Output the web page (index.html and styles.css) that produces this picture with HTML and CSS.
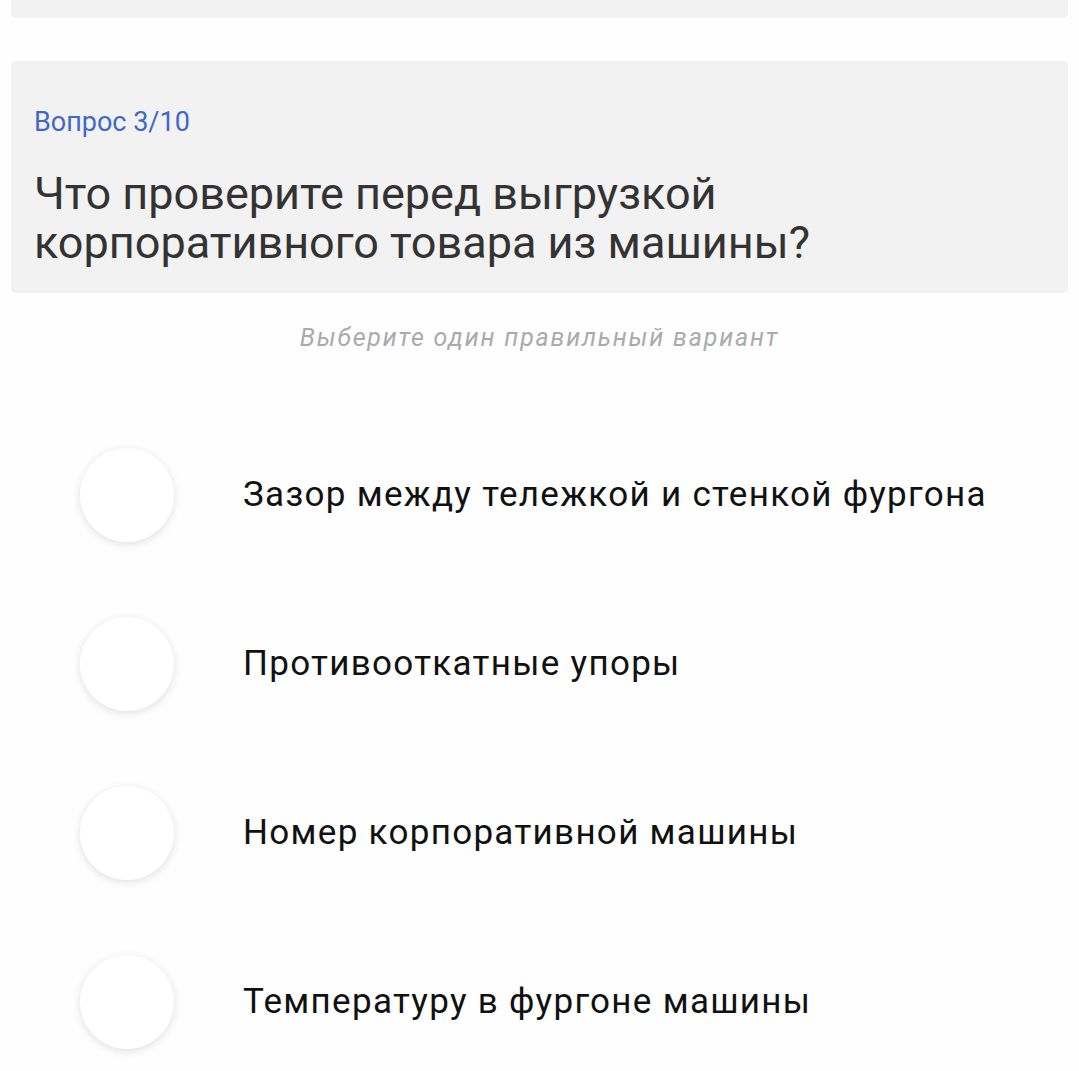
FILE: index.html
```html
<!DOCTYPE html>
<html lang="ru">
<head>
  <meta charset="UTF-8" />
  <title>Тест</title>
  <link rel="stylesheet" href="styles.css">
</head>
<body>

  <div class="card card-prev"></div>

  <div class="card question">
    <div class="counter">Вопрос 3/10</div>
    <h1 class="title">Что проверите перед выгрузкой корпоративного товара из машины?</h1>
  </div>

  <p class="hint">Выберите один правильный вариант</p>

  <ul class="answers">
    <li class="answer"><span class="radio"></span><span class="label">Зазор между тележкой и стенкой фургона</span></li>
    <li class="answer"><span class="radio"></span><span class="label">Противооткатные упоры</span></li>
    <li class="answer"><span class="radio"></span><span class="label">Номер корпоративной машины</span></li>
    <li class="answer"><span class="radio"></span><span class="label">Температуру в фургоне машины</span></li>
  </ul>

</body>
</html>
```

FILE: styles.css
```css
body {
  margin: 0;
  padding: 0 11px;
  background-color: #fefefe;
  font-family: Roboto, "Noto Sans", sans-serif;
  overflow: hidden;
}

.card {
  background-color: #f2f2f2;
  border-radius: 5px;
}

.card-prev {
  height: 60px;
  margin-top: -42px;
}

.question {
  box-sizing: border-box;
  margin-top: 43px;
  padding: 45px 23px 0;
  height: 232px;
}

.counter {
  color: #3f68c9;
  font-size: 27px;
  line-height: 32px;
}

.title {
  margin: 31px 0 0;
  color: #333333;
  font-size: 45px;
  font-weight: 400;
  line-height: 49px;
}

.hint {
  margin: 30px 0 0;
  text-align: center;
  color: #a9abaf;
  font-size: 25px;
  font-style: italic;
  letter-spacing: 1.8px;
  line-height: 30px;
}

.answers {
  list-style: none;
  margin: 57px 0 0;
  padding: 0 0 0 69px;
}

.answer {
  display: flex;
  align-items: center;
  height: 169px;
}

.radio {
  flex: none;
  width: 94px;
  height: 94px;
  border-radius: 50%;
  background-color: #ffffff;
  box-shadow: 0 2px 8px rgba(0, 0, 0, 0.12);
}

.label {
  margin-left: 69px;
  color: #111111;
  font-size: 35px;
  letter-spacing: 1.3px;
}
```
